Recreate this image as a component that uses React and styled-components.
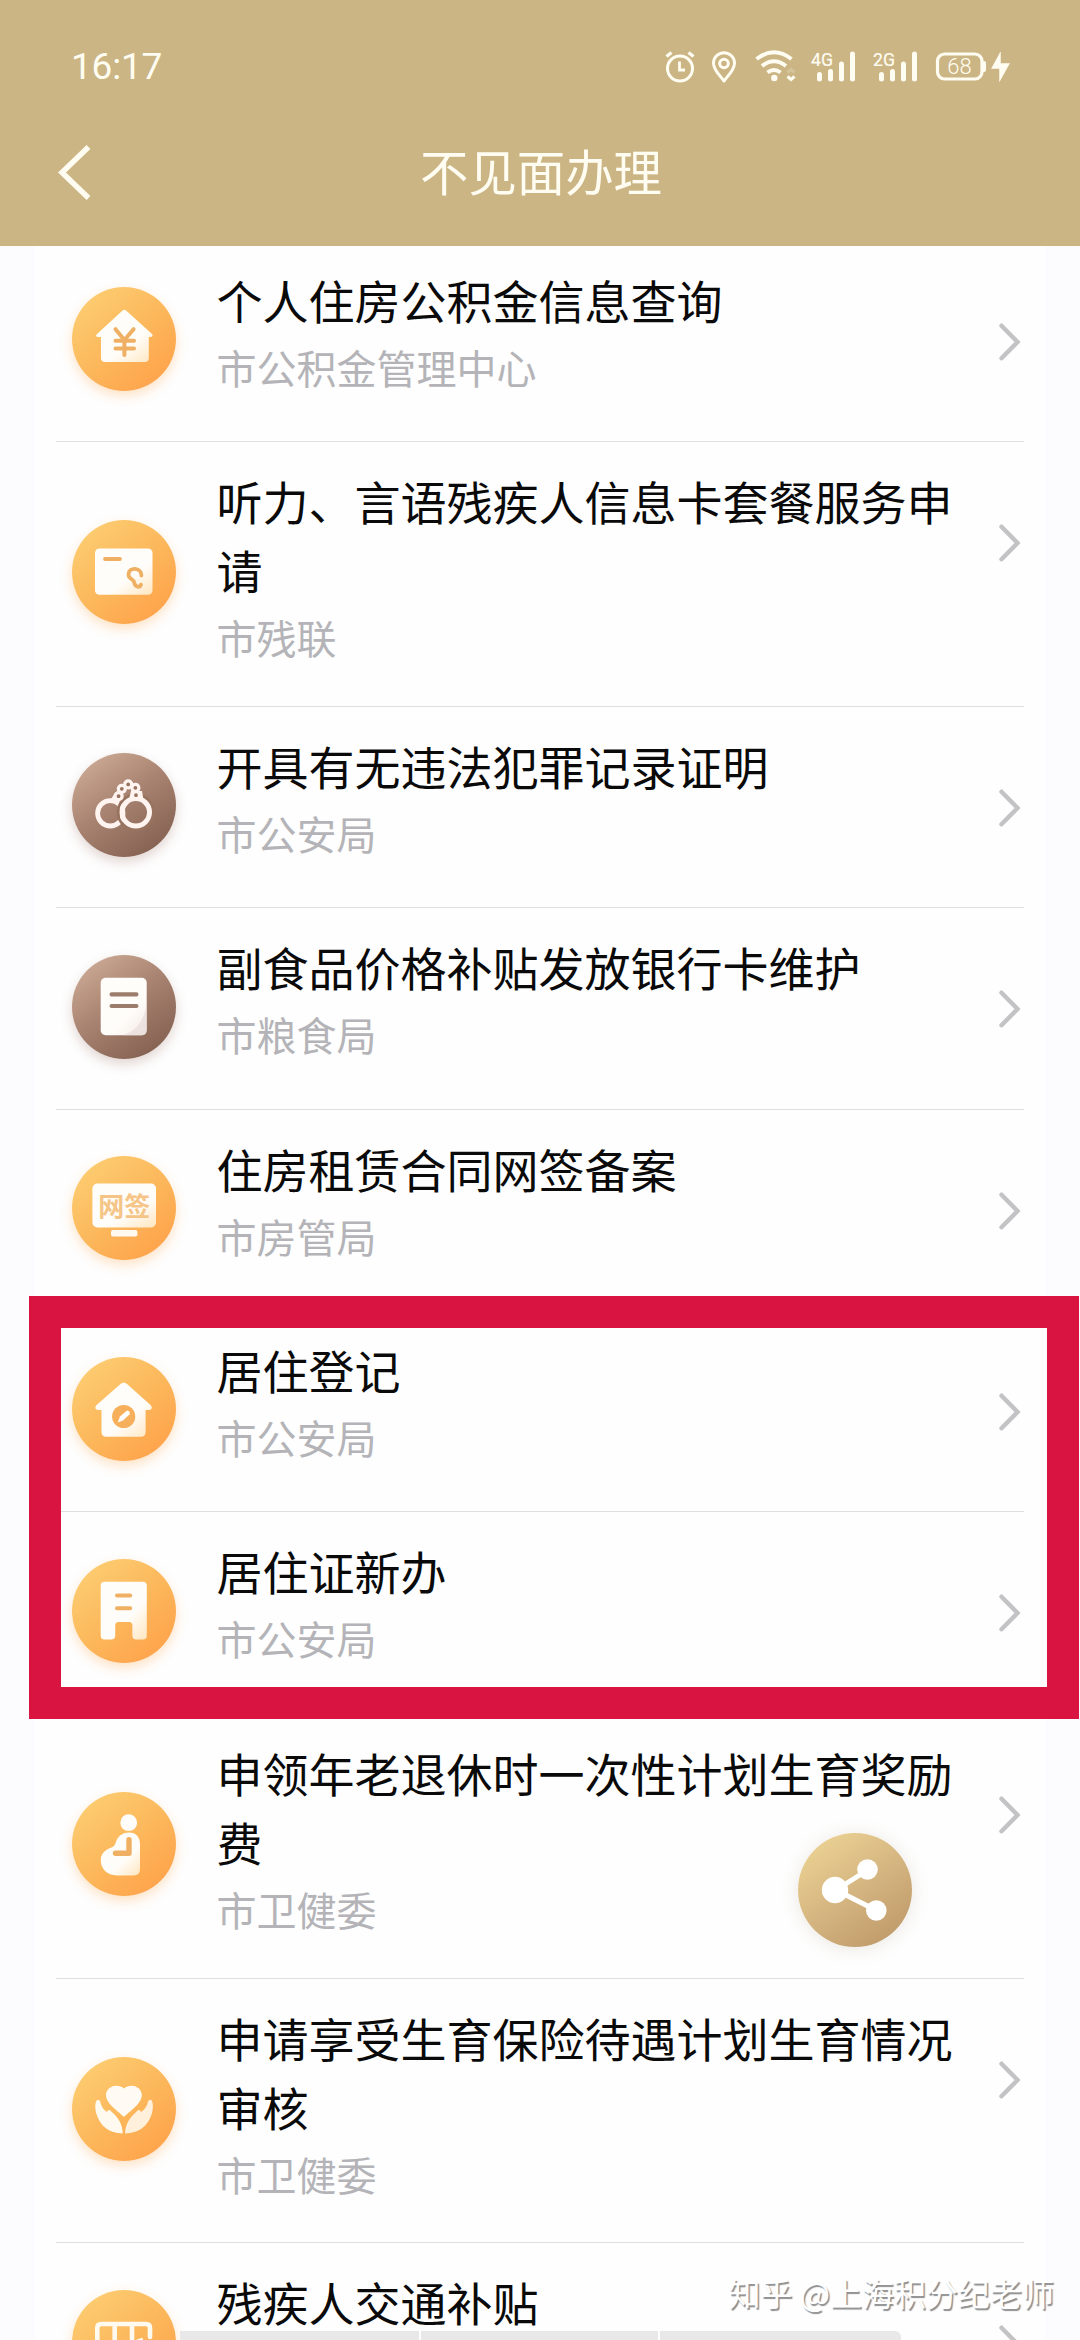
import styled, { createGlobalStyle } from "styled-components";

const GlobalStyle = createGlobalStyle`
  body {
    margin: 0;
    background-color: #fcfbfd;
    font-family: Roboto, "Noto Sans CJK SC", sans-serif;
  }
`;

const Page = styled.div`
  position: relative;
  width: 1080px;
  height: 2340px;
  overflow: hidden;
`;
const Header = styled.header`
  position: relative;
  z-index: 1;
  height: 246px;
  background-color: #cbb584;
  color: #fffdf1;
`;
const StatusBar = styled.div`
  display: flex;
  justify-content: space-between;
  align-items: center;
  height: 134px;
  padding: 0 70px 0 71px;
`;
const Time = styled.span`
  font-size: 37px;
  line-height: 40px;
  letter-spacing: -0.2px;
`;
const StatusIcons = styled.div`
  display: flex;
  align-items: center;
`;
const StatusIcon = styled.svg`
  display: block;
  width: ${(props) => props.$width}px;
  height: 34px;
  margin-left: ${(props) => props.$gap || 0}px;
  overflow: visible;
  fill: none;
  stroke: #fffdf1;
`;
const NavBar = styled.div`
  display: grid;
  grid-template-columns: 120px 1fr 120px;
  align-items: center;
  height: 76px;
`;
const BackIcon = styled.svg`
  width: 38px;
  height: 60px;
  margin-left: 55px;
  fill: none;
  stroke: #fffdf1;
  stroke-width: 5.5;
`;
const NavTitle = styled.h1`
  margin: -5px 0 0 2px;
  font-family: "Noto Sans CJK SC", sans-serif;
  font-size: 48.4px;
  font-weight: 400;
  line-height: 76px;
  text-align: center;
`;
const List = styled.main`
  width: 968px;
  margin: -5px 0 0 35px;
  padding: 0 21px;
  background-color: #fefefe;
`;
const Row = styled.div`
  display: flex;
  align-items: flex-start;
  box-sizing: border-box;
  height: ${(props) => (props.$tall ? 264.9 : 201.3)}px;
  border-bottom: 1px solid #dfdfe2;
`;
const Badge = styled.div`
  align-self: center;
  width: 104px;
  height: 104px;
  margin: 0 40.5px 4px 16px;
  border-radius: 50%;
  background: ${(props) =>
    props.$brown
      ? "linear-gradient(145deg, #cfae98 5%, #a98472 45%, #805c4d 95%)"
      : "linear-gradient(140deg, #fdcf74 5%, #fcb85c 50%, #ffa049 95%)"};
  box-shadow: 0 5px 12px
    ${(props) =>
      props.$brown ? "rgba(140, 90, 75, 0.25)" : "rgba(255, 165, 70, 0.3)"};
`;
const BadgeIcon = styled.svg`
  display: block;
  width: 104px;
  height: 104px;
`;
const Info = styled.div`
  width: 744px;
  padding-top: 24px;
  font-family: "Noto Sans CJK SC", sans-serif;
`;
const Name = styled.div`
  color: #0a0a0a;
  font-size: 46px;
  line-height: 69px;
`;
const Department = styled.div`
  margin-top: 4px;
  color: #b4b4b8;
  font-size: 40px;
  line-height: 58px;
`;
const Arrow = styled.svg`
  width: 24px;
  height: 40px;
  margin: 81px 0 0 37px;
  fill: none;
  stroke: #c3c3c6;
  stroke-width: 4.4;
  stroke-linecap: round;
`;
const Highlight = styled.div`
  position: absolute;
  left: 29px;
  top: 1296px;
  box-sizing: border-box;
  width: 1050px;
  height: 423px;
  border: 32px solid #d91441;
`;
const ShareButton = styled.button`
  position: absolute;
  left: 798px;
  top: 1833px;
  width: 114px;
  height: 114px;
  padding: 0;
  border: 0;
  border-radius: 50%;
  background: linear-gradient(145deg, #ebd193 10%, #d2b27e 55%, #bd9768 95%);
  box-shadow: 0 2px 18px rgba(130, 110, 70, 0.16);
`;
const BottomBar = styled.div`
  position: absolute;
  left: 180px;
  top: 2331px;
  display: grid;
  grid-template-columns: 239px 237px 241px;
  gap: 2px;
  width: 721px;
  height: 9px;
  overflow: hidden;
  border-radius: 0 6px 0 0;
`;
const BottomTab = styled.div`
  background-color: #e8e8e8;
`;
const Watermark = styled.div`
  position: absolute;
  right: 26px;
  top: 2269px;
  color: #fff;
  font-family: "Noto Sans CJK SC", sans-serif;
  font-size: 32px;
  line-height: 46px;
  white-space: nowrap;
  text-shadow: 1.5px 1.5px 1px #8e8e8e;
`;

const ORANGE = "#efb063";
const CREAM = "#fffaf0";

const Fade = ({ id, to }) => (
  <defs>
    <linearGradient id={id} x1="0.3" y1="0.2" x2="1" y2="1">
      <stop offset="0.5" stopColor="#fffdf9" />
      <stop offset="1" stopColor={to || "#ffe6c0"} />
    </linearGradient>
  </defs>
);

const YuanHouse = () => (
  <>
    <Fade id="yuan" />
    <path
      d="M49.5 24.5Q52.3 21 55.2 24.5L80 47Q82 49.5 78 50H76.8V71Q76.8 75 72.8 75H33Q29 75 29 71V50H26.5Q22.5 49.5 25 47Z"
      fill="url(#yuan)"
    />
    <path
      d="M43.5 42.2L52.4 53L61.6 42.2M52.4 53V68M43.5 53.7H62M43.5 61.6H62"
      fill="none"
      stroke={ORANGE}
      strokeWidth="4"
      strokeLinecap="round"
    />
  </>
);
const HearingCard = () => (
  <>
    <Fade id="card" />
    <rect x="23" y="28.5" width="57.5" height="46.2" rx="4.5" fill="url(#card)" />
    <g fill="none" stroke={ORANGE} strokeWidth="3.8" strokeLinecap="round">
      <path d="M33 39H48" />
      <path d="M69.4 55.6C69.5 47 56.6 46.5 56.5 54.5C56.6 59.5 61.5 58.5 62.2 62.5C63 67.5 68 67.8 69 64.6" />
    </g>
  </>
);
const Handcuffs = () => (
  <g fill="none" stroke="#fff4f0">
    <circle cx="38.3" cy="60.3" r="12.7" strokeWidth="4.8" />
    <path d="M39 46L43 40L49 44L47 49Z" fill="#fff4f0" stroke="none" />
    <circle cx="63.8" cy="59.3" r="17.8" stroke="#98735f" strokeWidth="2.6" />
    <circle cx="63.8" cy="59.3" r="13.7" strokeWidth="5" />
    <path d="M57 46.5L59 38H70L71.5 47Z" fill="#fff4f0" stroke="none" />
    <g fill="#98735f" strokeWidth="3.2">
      <circle cx="46.6" cy="43.2" r="3.5" />
      <circle cx="49.8" cy="35.8" r="3.5" />
      <circle cx="56.2" cy="31.4" r="3.5" />
      <circle cx="63.4" cy="34.8" r="3.5" />
      <circle cx="64" cy="42.2" r="3.5" />
    </g>
  </g>
);
const Document = () => (
  <>
    <Fade id="doc" to="#f4e8e6" />
    <rect x="28.7" y="22.7" width="46" height="57.6" rx="5" fill="url(#doc)" />
    <path
      d="M74.7 45.5C74 61 67 75 51.5 80.3H69.7Q74.7 80.3 74.7 75.3Z"
      fill="#e8dddb"
      opacity="0.75"
    />
    <path
      d="M39.6 39.4H64.4M39.6 51H64.4"
      stroke="#9b7c6d"
      strokeWidth="4.2"
      strokeLinecap="round"
    />
  </>
);
const SignMonitor = () => (
  <>
    <Fade id="sign" />
    <rect x="20.4" y="27.5" width="63.6" height="44" rx="5" fill="url(#sign)" />
    <rect x="39" y="74" width="26.4" height="6.6" rx="2" fill={CREAM} />
    <text
      x="52.2"
      y="59.5"
      textAnchor="middle"
      fontFamily="'Noto Sans CJK SC', sans-serif"
      fontSize="26"
      fontWeight="700"
      fill="#f5c588"
    >
      网签
    </text>
  </>
);
const EditHouse = () => (
  <>
    <Fade id="edit" />
    <path
      d="M48.5 27Q51.7 24 55 27L78.8 48.3Q81.5 52.5 77 53H73.6V75Q73.6 79.8 68.8 79.8H34.3Q29.5 79.8 29.5 75V53H26.5Q21.5 52.5 24.3 48.3Z"
      fill="url(#edit)"
    />
    <circle cx="51.7" cy="59.5" r="11.6" fill="#f6b05b" />
    <path d="M45.7 65.4L48 59.5L55 53.6Q58.4 54 57.6 57.2L51 63.5Z" fill="#fff" />
  </>
);
const Building = () => (
  <>
    <Fade id="build" />
    <path
      d="M32.7 22.7H70.8Q74.8 22.7 74.8 26.7V76.5Q74.8 80.5 70.8 80.5H64.4Q60.4 80.5 60.4 76.5V66.5Q60.4 63 57 63H46.5Q43.2 63 43.2 66.5V76.5Q43.2 80.5 39.2 80.5H32.7Q28.7 80.5 28.7 76.5V26.7Q28.7 22.7 32.7 22.7Z"
      fill="url(#build)"
    />
    <path
      d="M45 36.6H58.2M45 49.3H58.2"
      stroke={ORANGE}
      strokeWidth="4"
      strokeLinecap="round"
    />
  </>
);
const Pregnant = () => (
  <>
    <Fade id="preg" />
    <circle cx="56.7" cy="30.7" r="8.4" fill="#fffdf9" />
    <path
      d="M57 40.5C64 40.5 68 45 68 52V77Q68 83.5 61.5 83.5H45C35 83 28.5 77 28.8 67.5C29 61 34 57.5 39.5 55.5C43 54 43.2 52 44.5 48.5C46.5 43.5 51 40.5 57 40.5Z"
      fill="url(#preg)"
    />
    <path
      d="M57 47.8V61.2H43.5"
      fill="none"
      stroke={ORANGE}
      strokeWidth="5.4"
      strokeLinecap="round"
      strokeLinejoin="round"
    />
  </>
);
const CaringHands = () => (
  <>
    <path
      d="M52 59.8C47 55 34 46.5 34 38.2C34 29 46 26 52 31.5C58 26 69.8 29 69.8 38.2C69.8 46.5 57 55 52 59.8Z"
      fill="#fffaf3"
    />
    <path
      d="M26.5 42.8C23 42.5 22.6 50 24.3 56.5C28 69.5 37.5 76 50.6 76.5C50.8 67.5 46.5 60.5 38.3 53.4C36.5 52.2 35 53.5 35.2 55.2C31 52.5 29 48.5 28.3 45Q27.8 43 26.5 42.8Z"
      fill={CREAM}
    />
    <path
      d="M78 42.8C81.2 42.5 81.6 50 79.9 56.5C76 69.5 66.5 76 53.2 76.5C53 67.5 57.5 60.5 65.7 53.4C67.5 52.2 69 53.5 68.8 55.2C73 52.5 75.2 48.5 75.9 45Q76.4 43 78 42.8Z"
      fill="#fff0dc"
    />
  </>
);
const Bus = () => (
  <g fill="none" stroke={CREAM} strokeWidth="4.6" strokeLinejoin="round">
    <path d="M25.3 72V38Q25.3 34 29.3 34H74Q78 34 78 38V47" strokeLinecap="round" />
    <path d="M42.7 34V58M60 34V50M25.3 58H50" />
    <path d="M71 50Q60 52 60 61Q60 72 70 72" />
  </g>
);

const services = [
  { name: "个人住房公积金信息查询", dept: "市公积金管理中心", icon: YuanHouse },
  {
    name: "听力、言语残疾人信息卡套餐服务申请",
    dept: "市残联",
    icon: HearingCard,
    tall: true,
  },
  { name: "开具有无违法犯罪记录证明", dept: "市公安局", icon: Handcuffs, brown: true },
  { name: "副食品价格补贴发放银行卡维护", dept: "市粮食局", icon: Document, brown: true },
  { name: "住房租赁合同网签备案", dept: "市房管局", icon: SignMonitor },
  { name: "居住登记", dept: "市公安局", icon: EditHouse },
  { name: "居住证新办", dept: "市公安局", icon: Building },
  {
    name: "申领年老退休时一次性计划生育奖励费",
    dept: "市卫健委",
    icon: Pregnant,
    tall: true,
  },
  {
    name: "申请享受生育保险待遇计划生育情况审核",
    dept: "市卫健委",
    icon: CaringHands,
    tall: true,
  },
  { name: "残疾人交通补贴", dept: "", icon: Bus },
];

const Service = ({ item }) => {
  const Icon = item.icon;
  return (
    <Row $tall={item.tall}>
      <Badge $brown={item.brown}>
        <BadgeIcon viewBox="0 0 104 104">
          <Icon />
        </BadgeIcon>
      </Badge>
      <Info>
        <Name>{item.name}</Name>
        {item.dept && <Department>{item.dept}</Department>}
      </Info>
      <Arrow viewBox="0 0 24 40">
        <path d="M3.5 3.7L19.5 20L3.5 36.3" />
      </Arrow>
    </Row>
  );
};

const Signal = ({ label, gap }) => (
  <StatusIcon $width={44} $gap={gap} viewBox="0 0 44 34">
    <text
      x="0"
      y="15.5"
      fontFamily="Roboto, sans-serif"
      fontSize="18.5"
      textLength="22"
      lengthAdjust="spacingAndGlyphs"
      fill="#fffdf1"
      strokeWidth="0.2"
    >
      {label}
    </text>
    <path
      d="M8.5 24.5V29M19.5 21.5V29M30.5 14V29M41.5 4V29"
      strokeWidth="5"
      strokeLinecap="round"
    />
  </StatusIcon>
);

const App = () => {
  return (
    <Page>
      <GlobalStyle />
      <Header>
        <StatusBar>
          <Time>16:17</Time>
          <StatusIcons>
            <StatusIcon $width={30} viewBox="0 0 30 34">
              <circle cx="15" cy="18.5" r="12.5" strokeWidth="3" />
              <path d="M14.5 11.5V20H20" strokeWidth="2.8" />
              <path d="M1.5 6.5L6.5 2.5M23.5 2.5L28.5 6.5" strokeWidth="3.4" />
            </StatusIcon>
            <StatusIcon $width={26} $gap={16} viewBox="0 0 26 34">
              <path
                d="M13 31C9 25.5 2.5 20 2.5 13.2A10.5 10.5 0 0 1 23.5 13.2C23.5 20 17 25.5 13 31Z"
                strokeWidth="3"
                strokeLinejoin="round"
              />
              <circle cx="13" cy="13.5" r="4.3" strokeWidth="3" />
            </StatusIcon>
            <StatusIcon $width={41} $gap={18} viewBox="0 0 41 34">
              <path
                d="M1.5 9Q19 -4.5 36.5 9M7 16Q19 6.5 31 16M12.5 22.5Q19 17.5 25.5 22.5"
                strokeWidth="4"
              />
              <circle cx="19.3" cy="28" r="3.2" fill="#fffdf1" stroke="none" />
              <path d="M32.5 26.5L36 29.5L39.5 26.5" strokeWidth="3" />
              <path d="M32.5 22.5L36 19.5L39.5 22.5" strokeWidth="3" opacity="0.2" />
            </StatusIcon>
            <Signal label="4G" gap={15} />
            <Signal label="2G" gap={18} />
            <StatusIcon $width={51} $gap={18} viewBox="0 0 51 34">
              <rect x="2.5" y="4" width="44.5" height="25" rx="7" strokeWidth="3.2" />
              <path d="M49 13V20" strokeWidth="4" strokeLinecap="round" />
              <text
                x="24.5"
                y="24"
                textAnchor="middle"
                fontFamily="Roboto, sans-serif"
                fontSize="22"
                fontWeight="300"
                fill="#fffdf1"
                stroke="none"
              >
                68
              </text>
            </StatusIcon>
            <StatusIcon $width={19} $gap={5} viewBox="0 0 19 34">
              <path
                d="M9.5 2L0.5 18.5H8.5V31.5L18.5 13.5H9.5Z"
                fill="#fffdf1"
                strokeWidth="0.5"
              />
            </StatusIcon>
          </StatusIcons>
        </StatusBar>
        <NavBar>
          <BackIcon viewBox="0 0 38 60">
            <path d="M33.5 5L7 30.5L33.5 56" />
          </BackIcon>
          <NavTitle>不见面办理</NavTitle>
        </NavBar>
      </Header>
      <List>
        {services.map((item) => (
          <Service key={item.name} item={item} />
        ))}
      </List>
      <Highlight />
      <ShareButton aria-label="分享">
        <svg width="114" height="114" viewBox="0 0 114 114">
          <path
            d="M70.5 36.5L38 57L78.5 77.5"
            fill="none"
            stroke="#fff"
            strokeWidth="5"
          />
          <circle cx="37" cy="57" r="13.2" fill="#fff" />
          <circle cx="69.5" cy="36.5" r="10.3" fill="#fff" />
          <circle cx="78.3" cy="77.5" r="10.3" fill="#fff" />
        </svg>
      </ShareButton>
      <BottomBar>
        <BottomTab />
        <BottomTab />
        <BottomTab />
      </BottomBar>
      <Watermark>知乎 @上海积分纪老师</Watermark>
    </Page>
  );
};

export default App;
